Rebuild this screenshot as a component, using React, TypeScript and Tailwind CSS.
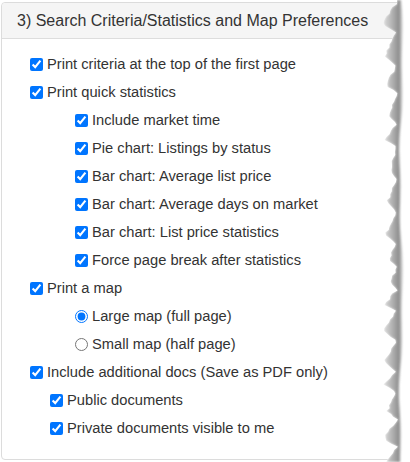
import React from 'react';

type Row = { label: string; level: 0 | 1 | 2; kind?: 'check' | 'radio'; checked?: boolean };

const rows: Row[] = [
  { label: 'Print criteria at the top of the first page', level: 0 },
  { label: 'Print quick statistics', level: 0 },
  { label: 'Include market time', level: 2 },
  { label: 'Pie chart: Listings by status', level: 2 },
  { label: 'Bar chart: Average list price', level: 2 },
  { label: 'Bar chart: Average days on market', level: 2 },
  { label: 'Bar chart: List price statistics', level: 2 },
  { label: 'Force page break after statistics', level: 2 },
  { label: 'Print a map', level: 0 },
  { label: 'Large map (full page)', level: 2, kind: 'radio', checked: true },
  { label: 'Small map (half page)', level: 2, kind: 'radio', checked: false },
  { label: 'Include additional docs (Save as PDF only)', level: 0 },
  { label: 'Public documents', level: 1 },
  { label: 'Private documents visible to me', level: 1 },
];

// torn right edge, drawn in overlay coords (overlay starts at x=360)
const edge = (() => {
  let seed = 11;
  const rnd = () => {
    seed = (seed * 9301 + 49297) % 233280;
    return seed / 233280;
  };
  const torn: [number, number][] = [[37, 0], [37, 4]];
  let y = 4;
  while (y < 462) {
    const period = 18 + rnd() * 16;
    const depth = 6 + rnd() * 8;
    const top = 34 + rnd() * 4;
    const steps = Math.max(4, Math.round(period / 3));
    for (let s = 1; s <= steps; s++) {
      const t = s / steps;
      // sawtooth: slow slide in, fast snap out
      const tooth = t < 0.7 ? t / 0.7 : (1 - t) / 0.3;
      const x = top - depth * tooth + (rnd() - 0.5) * 2.5;
      torn.push([x, Math.min(462, y + period * t)]);
    }
    y += period;
  }
  const right: [number, number][] = [];
  for (let yy = 462; yy >= 0; yy -= 6) {
    right.push([41 + Math.sin(yy / 37) * 1.5 + Math.sin(yy / 13) * 0.8, yy]);
  }
  const line = torn.map(([x, yy], i) => `${i ? 'L' : 'M'}${x.toFixed(1)} ${yy.toFixed(1)}`).join(' ');
  const cut = `${line} L60 462 L60 0 Z`;
  const shade = `${line} ${right.map(([x, yy]) => `L${x.toFixed(1)} ${yy}`).join(' ')} Z`;
  return { line, cut, shade };
})();

function TornEdge() {
  return (
    <svg className="absolute top-0 right-0 h-[462px] w-[50px]" viewBox="0 0 50 462" preserveAspectRatio="none">
      <defs>
        <linearGradient id="shadeFill" gradientUnits="userSpaceOnUse" x1="22" y1="0" x2="44" y2="0">
          <stop offset="0" stopColor="#e4e4e4" />
          <stop offset="0.55" stopColor="#a8a8a8" />
          <stop offset="0.78" stopColor="#8c8c8c" />
          <stop offset="1" stopColor="#ffffff" />
        </linearGradient>
        <filter id="soft" x="-50%" y="-5%" width="200%" height="110%">
          <feGaussianBlur stdDeviation="0.8" />
        </filter>
        <clipPath id="cut">
          <path d={edge.cut} />
        </clipPath>
      </defs>
      <path d={edge.cut} fill="#ffffff" />
      <g clipPath="url(#cut)">
        <path d={edge.shade} fill="url(#shadeFill)" filter="url(#soft)" />
      </g>
    </svg>
  );
}

export default function App() {
  return (
    <div className="relative w-[410px] h-[462px] bg-white overflow-hidden" style={{ fontFamily: '"Liberation Sans", Arial, sans-serif' }}>
      <div className="ml-[1px] mt-[2px] w-[430px] h-[458px] border border-[#dcdcdc] rounded-[4px] bg-white text-[#333333]">
        <div className="h-[36px] bg-[#f5f5f5] border-b border-[#dddddd] rounded-t-[4px] pl-[15px] flex items-center text-[16px]">
          3) Search Criteria/Statistics and Map Preferences
        </div>
        <div className="pt-[11px] flex flex-col">
          {rows.map((r) => (
            <label
              key={r.label}
              className={`h-[28px] flex items-center gap-[4px] text-[14.7px] ${r.level === 0 ? 'pl-[28px]' : r.level === 1 ? 'pl-[48px]' : 'pl-[73px]'}`}
            >
              {r.kind === 'radio' ? (
                <input type="radio" name="map" defaultChecked={r.checked} className="m-0 w-[13px] h-[13px] accent-[#0075ff]" />
              ) : (
                <input type="checkbox" defaultChecked className="m-0 w-[13px] h-[13px] accent-[#0075ff]" />
              )}
              <span>{r.label}</span>
            </label>
          ))}
        </div>
      </div>
      <TornEdge />
    </div>
  );
}
